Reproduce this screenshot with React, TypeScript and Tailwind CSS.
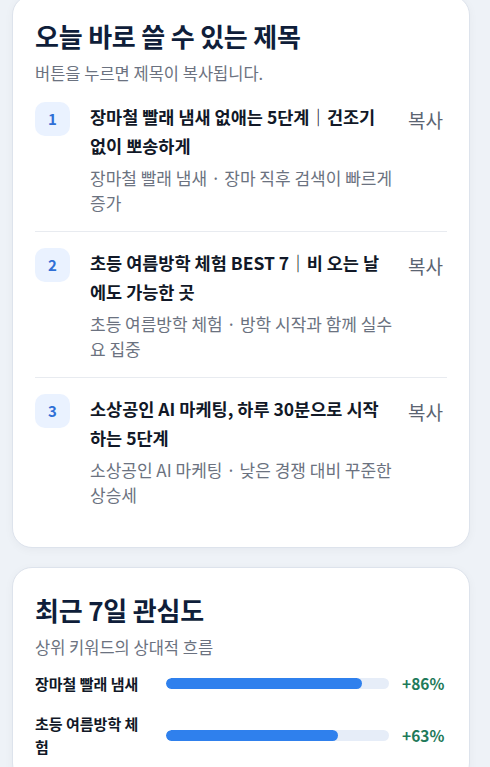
import React from 'react';

const titles = [
  {
    no: 1,
    title: '장마철 빨래 냄새 없애는 5단계｜건조기 없이 뽀송하게',
    keyword: '장마철 빨래 냄새',
    note: '장마 직후 검색이 빠르게 증가',
  },
  {
    no: 2,
    title: '초등 여름방학 체험 BEST 7｜비 오는 날에도 가능한 곳',
    keyword: '초등 여름방학 체험',
    note: '방학 시작과 함께 실수요 집중',
  },
  {
    no: 3,
    title: '소상공인 AI 마케팅, 하루 30분으로 시작하는 5단계',
    keyword: '소상공인 AI 마케팅',
    note: '낮은 경쟁 대비 꾸준한 상승세',
  },
];

const trends = [
  { label: '장마철 빨래 냄새', fill: 88, delta: '+86%' },
  { label: '초등 여름방학 체험', fill: 77, delta: '+63%' },
];

const App = () => {
  return (
    <div
      className="min-h-screen bg-[#eef2f7] pl-[12px] pr-[20px] pb-10"
      style={{ fontFamily: '"Noto Sans CJK KR", "Noto Sans", sans-serif' }}
    >
      <section className="-mt-[5px] rounded-[20px] border border-[#dde3ec] bg-white px-[22px] pt-[23px] pb-[24px] shadow-[0_2px_10px_rgba(15,30,60,0.04)]">
        <h2 className="text-[26px] font-bold leading-[34px] tracking-[-0.2px] text-[#0f1e3a]">
          오늘 바로 쓸 수 있는 제목
        </h2>
        <p className="mt-[9px] text-[16.5px] leading-[22px] text-[#6b7280]">버튼을 누르면 제목이 복사됩니다.</p>

        <ul className="mt-[2px]">
          {titles.map((item, i) => (
            <li
              key={item.no}
              className={`flex items-start py-4 ${i < titles.length - 1 ? 'border-b border-[#e8ebf0]' : ''}`}
            >
              <div className="mr-[20px] flex h-[34px] w-[35px] shrink-0 items-center justify-center rounded-[10px] bg-[#eaf2ff] text-[15px] font-bold text-[#2f6fd6]">
                {item.no}
              </div>
              <div className="min-w-0 flex-1">
                <div className="text-[17.5px] font-bold leading-[29px] text-[#111827]">{item.title}</div>
                <div className="mt-[5px] text-[17px] leading-[25px] text-[#6b7280]">
                  {item.keyword} · {item.note}
                </div>
              </div>
              <button className="ml-[14px] shrink-0 pr-[4px] pt-[4px] text-[19px] leading-[28px] text-[#5b6472]">
                복사
              </button>
            </li>
          ))}
        </ul>
      </section>

      <section className="mt-[19px] rounded-[20px] border border-[#dde3ec] bg-white px-[22px] pt-[25px] pb-[24px] shadow-[0_2px_10px_rgba(15,30,60,0.04)]">
        <h2 className="text-[26px] font-bold leading-[34px] tracking-[-0.2px] text-[#0f1e3a]">최근 7일 관심도</h2>
        <p className="mt-[9px] text-[16.5px] leading-[22px] text-[#6b7280]">상위 키워드의 상대적 흐름</p>

        <div className="mt-[14px] flex flex-col gap-[17px]">
          {trends.map((t) => (
            <div key={t.label} className="flex items-center">
              <div className="w-[116px] shrink-0 text-[15px] font-bold leading-[23px] text-[#111827]">{t.label}</div>
              <div className="ml-[15px] h-[11px] flex-1 overflow-hidden rounded-full bg-[#e6edf8]">
                <div className="h-full rounded-full bg-[#2f80ed]" style={{ width: `${t.fill}%` }} />
              </div>
              <div className="ml-[13px] w-[45px] shrink-0 pr-[3px] text-right text-[15.5px] font-bold text-[#1f7a5a]">
                {t.delta}
              </div>
            </div>
          ))}
        </div>
      </section>
    </div>
  );
};

export default App;
